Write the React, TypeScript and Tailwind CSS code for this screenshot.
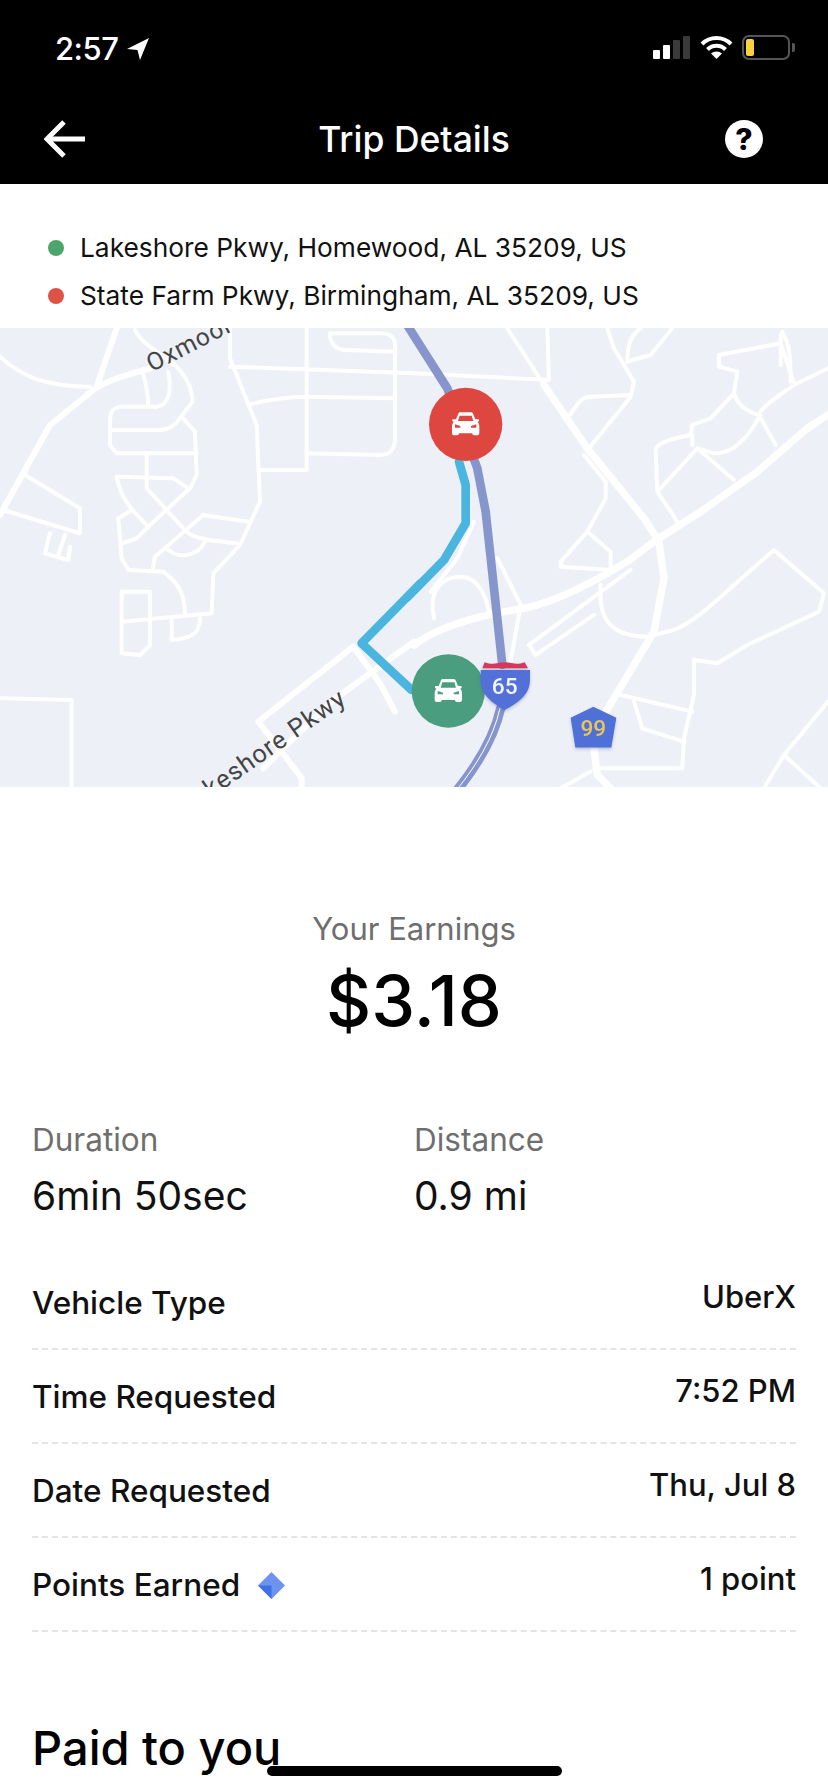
import { ReactNode } from 'react';

const FONT = "font-['Inter','Liberation_Sans',sans-serif]";

function StatusBar() {
  return (
    <div className="flex h-[90px] items-start justify-between pl-[55px] pr-[33px] pt-[31px]">
      <div className="flex items-center gap-[8px]">
        <span className="text-[31px] font-medium leading-[36px] tracking-[-0.5px] text-white">2:57</span>
        <svg width="24" height="24" viewBox="0 0 24 24">
          <path d="M23 1 L1 12 L11.5 13 L14 23 Z" fill="#fff" />
        </svg>
      </div>
      <div className="flex items-center gap-[9px] pt-[4px]">
        <svg width="38" height="25" viewBox="0 0 38 25">
          <rect x="0" y="15" width="7" height="9" rx="1" fill="#fff" />
          <rect x="10" y="10" width="7" height="14" rx="1" fill="#fff" />
          <rect x="20" y="5" width="7" height="19" rx="1" fill="#3a3a3a" />
          <rect x="30" y="1" width="7" height="23" rx="1" fill="#3a3a3a" />
        </svg>
        <svg width="33" height="25" viewBox="0 0 33 25" fill="none" stroke="#fff" strokeWidth="4">
          <path d="M2 9 C10 1 23 1 31 9" />
          <path d="M7.5 14.5 C12.5 9.5 20.5 9.5 25.5 14.5" />
          <path d="M16.5 24 L11 18.5 C14 15.8 19 15.8 22 18.5 Z" fill="#fff" stroke="none" />
        </svg>
        <div className="flex items-center gap-[2px]">
          <div className="h-[25px] w-[48px] rounded-[7px] border-2 border-[#555] p-[2px]">
            <div className="h-full w-[8px] rounded-[2px] bg-[#f7d13f]" />
          </div>
          <div className="h-[9px] w-[3px] rounded-r-[2px] bg-[#555]" />
        </div>
      </div>
    </div>
  );
}

function NavBar() {
  return (
    <div className="flex h-[94px] items-start px-[44px] pt-[30px]">
      <div className="flex-1">
        <svg width="41" height="38" viewBox="0 0 41 38" fill="none" stroke="#fff" strokeWidth="5">
          <path d="M20 2 L3 19 L20 36" />
          <path d="M3 19 L41 19" />
        </svg>
      </div>
      <span className="text-[35.5px] font-medium leading-[40px] text-white">Trip Details</span>
      <div className="flex flex-1 justify-end">
        <div className="mr-[21px] flex h-[38px] w-[38px] items-center justify-center rounded-full bg-white text-[30px] font-extrabold leading-none text-black">
          ?
        </div>
      </div>
    </div>
  );
}

function AddressLine({ dot, text }: { dot: string; text: string }) {
  return (
    <div className="flex h-[48px] items-center">
      <div className={`ml-[48px] h-[16px] w-[16px] rounded-full ${dot}`} />
      <span className="ml-[16px] text-[26.3px] leading-[32px] text-[#111]">{text}</span>
    </div>
  );
}

function CarIcon({ cx, cy }: { cx: number; cy: number }) {
  return (
    <g transform={`translate(${cx - 42} ${cy - 36})`} fill="#fff">
      <path d="M20 4 C21 1 24 0 27 0 L57 0 C60 0 63 1 64 4 L71 21 L78 21 C81 21 83 23 82 26 L78 29 C81 33 83 37 83 42 L83 62 C83 67 80 69 76 69 L68 69 C64 69 62 67 62 63 L22 63 C22 67 20 69 16 69 L8 69 C4 69 1 67 1 62 L1 42 C1 37 3 33 6 29 L2 26 C1 23 3 21 6 21 L13 21 Z" />
      <path d="M24 10 L60 10 L65 26 L19 26 Z M10 36 L10 46 L26 46 L26 41 Z M74 36 L74 46 L58 46 L58 41 Z" fill="currentColor" />
    </g>
  );
}

const thinLeft = [
  'M0 95 C60 150 130 185 270 185',
  'M405 15 C440 90 570 100 578 230 L540 280 C520 310 500 315 480 315 L335 315',
  'M430 150 C440 190 445 210 445 245',
  'M505 140 C515 190 510 240 470 245 L360 245 C335 250 330 265 330 290 L330 360 L350 385 L590 385',
  'M550 280 L585 320 L590 450 L570 490 L450 600 L410 640 L365 655',
  'M440 385 L440 490 L550 610 C570 640 620 645 710 655',
  'M350 455 L520 460 L565 490',
  'M350 455 C360 520 400 560 445 605',
  'M395 555 L355 580 L365 700 L385 735 L490 740 C530 770 555 800 555 870',
  'M745 590 L610 570 L465 695 L458 735',
  'M500 670 C530 700 590 700 615 650',
  'M450 800 L365 800 L365 985 L420 990 L450 960 Z',
  'M515 885 L515 945 C560 940 600 935 600 880',
  'M75 450 L240 550 L240 625 L10 555',
  'M150 625 L135 685 L205 705 L210 665',
  'M195 630 L175 690',
  'M690 125 L1242 145',
  'M920 10 L920 435 L780 435',
  'M745 240 C800 225 870 215 920 215 L1180 220',
  'M920 385 L1140 390 C1170 390 1185 375 1185 340 L1185 50 C1175 25 1160 25 1130 25 L990 25 C990 60 1010 75 1040 75 L1180 80',
  'M0 1120 L215 1125 L215 1390',
  'M365 890 L635 865 L640 745 L720 660 L780 530 L770 300 L690 100 L690 10',
];

const thickLeft = [
  'M350 10 L290 185',
  'M0 570 L150 300 L280 195 C330 160 400 145 450 130',
  'M1060 965 L775 1190 L860 1300 L905 1360 L905 1390',
  'M1060 965 L1140 1075 L1185 1160',
  'M1242 950 L1000 1125 L860 1260 L790 1330',
];

const thinRight = [
  'M280 10 L390 180',
  'M400 10 L405 165 L0 145',
  'M460 280 C490 240 500 215 530 215 L650 210',
  'M580 10 L600 70 L660 170 L650 215 L525 370',
  'M775 10 L710 90 L640 110 C640 60 650 30 680 10',
  'M510 390 L575 470 L575 520 L520 620 L440 710 L440 725 L590 735 L590 680 L520 620',
  'M60 880 C40 790 90 755 140 755 C190 755 215 810 225 860',
  'M180 590 L130 700 L50 800',
  'M250 700 L320 840 L290 1010',
  'M345 960 L650 735',
  'M345 960 L365 990 L540 870',
  'M560 780 C550 900 610 935 700 935 L780 915 C860 880 900 830 1080 675 L1230 805 L1215 860 L1000 960 L910 1015 L840 1005 L840 1110 L810 1240 L805 1330 L540 1330',
  'M620 1110 L835 1160',
  'M660 1130 L685 1210 L810 1250',
  'M440 1390 L530 1340',
  'M1242 1130 L1110 1290 L1050 1390',
  'M1110 1290 L1220 1390',
  'M790 590 L730 500 L725 375 C730 350 780 340 830 330 L835 300 L890 280 L960 205 L970 140 L915 125 L915 90 L1100 55 L1140 175',
  'M1100 30 L1100 120',
  'M1105 20 C1130 60 1130 120 1130 170',
  'M960 205 C970 240 1000 260 1035 270 L1085 360',
  'M1040 270 C1000 340 960 385 900 385 L850 370 L735 495',
  'M850 370 L960 465',
  'M835 330 L835 360',
  'M1040 260 C1060 230 1100 210 1140 180 L1242 130',
];

const thickRight = [
  'M390 180 L520 370 L690 580 L735 650 L750 760 L720 920 L570 1170',
  'M0 960 C80 900 200 870 330 850 C430 830 560 760 640 710 L720 650 L860 560 L1030 440 L1180 310 L1242 270',
  'M540 1270 L550 1350 L590 1390',
];

function TripMap() {
  return (
    <svg className="block h-[459px] w-[828px] shrink-0 bg-[#edf0f7]" viewBox="0 0 828 459">
      <defs>
        <filter id="badge" x="-30%" y="-30%" width="160%" height="170%">
          <feDropShadow dx="0" dy="5" stdDeviation="4" floodColor="#3a4a80" floodOpacity="0.3" />
        </filter>
      </defs>
      <g transform="translate(0 -3) scale(0.3333)" fill="none" strokeLinejoin="round" strokeLinecap="round">
        <g stroke="#fff" strokeWidth="12">
          {thinLeft.map((d) => <path key={d} d={d} />)}
        </g>
        <g stroke="#fff" strokeWidth="18">
          {thickLeft.map((d) => <path key={d} d={d} />)}
        </g>
        <path d="M1262 775 L1085 955 L1235 1095" stroke="#4ab5de" strokeWidth="26" />
        <text x="0" y="0" transform="translate(455 142) rotate(-27)" fontFamily="Roboto, sans-serif" fontSize="74" letterSpacing="3" fill="#444" stroke="none">Oxmoor</text>
        <text x="0" y="0" transform="translate(560 1470) rotate(-35)" fontFamily="Roboto, sans-serif" fontSize="76" letterSpacing="3" fill="#444" stroke="none">Lakeshore Pkwy</text>
      </g>
      <g transform="translate(414 -3) scale(0.3333)" fill="none" strokeLinejoin="round" strokeLinecap="round">
        <g stroke="#fff" strokeWidth="12">
          {thinRight.map((d) => <path key={d} d={d} />)}
        </g>
        <g stroke="#fff" strokeWidth="22">
          {thickRight.map((d) => <path key={d} d={d} />)}
        </g>
        <path d="M135 410 L155 480 L155 595 L90 705 L-20 817" stroke="#4ab5de" strokeWidth="26" />
        <path d="M-27 -10 L100 190 L190 430 L215 560 L265 1020" stroke="#8696cc" strokeWidth="26" />
        <path d="M260 1150 C240 1240 190 1320 130 1395" stroke="#8696cc" strokeWidth="28" />
        <path d="M258 1150 C238 1240 188 1320 128 1395" stroke="#fff" strokeWidth="3" />

        <circle cx="155" cy="298" r="110" fill="#de4640" />
        <g color="#de4640"><CarIcon cx={155} cy={298} /></g>
        <circle cx="103" cy="1098" r="110" fill="#4a9d7f" />
        <g color="#4a9d7f"><CarIcon cx={103} cy={1098} /></g>

        <g filter="url(#badge)">
          <path d="M200 1035 C260 1035 320 1035 348 1035 L348 1065 C348 1110 310 1135 272 1155 C235 1135 200 1110 200 1065 Z" fill="#5270d8" />
          <path d="M205 1030 L212 1012 C240 1022 250 1012 272 1012 C295 1012 305 1022 332 1012 L342 1030 Z" fill="#d6395c" />
          <text x="272" y="1107" textAnchor="middle" fontFamily="Roboto, sans-serif" fontSize="68" fontWeight="500" fill="#f2f4fb" stroke="none">65</text>
        </g>
        <g filter="url(#badge)">
          <path d="M538 1145 L607 1178 L592 1268 L484 1268 L470 1178 Z" fill="#4f6fd6" />
          <text x="538" y="1232" textAnchor="middle" fontFamily="Roboto, sans-serif" fontSize="68" fontWeight="500" fill="#e9c65a" stroke="none">99</text>
        </g>
      </g>
    </svg>
  );
}

function Stat({ label, value }: { label: string; value: string }) {
  return (
    <div className="flex w-[383px] flex-col">
      <span className="text-[31.5px] leading-[36px] text-[#6e6e6e]">{label}</span>
      <span className="mt-[16px] text-[39px] leading-[44px] text-[#111]">{value}</span>
    </div>
  );
}

function DetailRow({ label, value, extra }: { label: string; value: string; extra?: ReactNode }) {
  return (
    <div className="flex h-[94px] items-start justify-between border-b-2 border-dashed border-[#e4e4e4] text-[31.5px] font-medium leading-[36px] text-[#111]">
      <div className="flex items-center gap-[18px] pt-[29px]">
        <span>{label}</span>
        {extra}
      </div>
      <span className="pt-[23px] text-[31px]">{value}</span>
    </div>
  );
}

function Diamond() {
  return (
    <svg width="27" height="27" viewBox="0 0 27 27">
      <path d="M13.5 0 L27 13.5 L13.5 27 L0 13.5 Z" fill="#6e93ee" />
      <path d="M0 13.5 L13.5 13.5 L13.5 27 Z" fill="#3f70e8" />
    </svg>
  );
}

export default function App() {
  return (
    <div className={`relative flex h-[1792px] w-[828px] flex-col overflow-hidden bg-white ${FONT}`}>
      <div className="shrink-0 bg-black">
        <StatusBar />
        <NavBar />
      </div>

      <div className="flex h-[144px] shrink-0 flex-col pt-[40px]">
        <AddressLine dot="bg-[#4ca66b]" text="Lakeshore Pkwy, Homewood, AL 35209, US" />
        <AddressLine dot="bg-[#dd5347]" text="State Farm Pkwy, Birmingham, AL 35209, US" />
      </div>

      <TripMap />

      <div className="flex shrink-0 flex-col items-center pt-[124px]">
        <span className="text-[31px] leading-[36px] text-[#6e6e6e]">Your Earnings</span>
        <span className="mt-[14px] text-[70px] font-medium leading-[80px] text-black">$3.18</span>
      </div>

      <div className="flex shrink-0 px-[32px] pt-[81px]">
        <Stat label="Duration" value="6min 50sec" />
        <Stat label="Distance" value="0.9 mi" />
      </div>

      <div className="flex shrink-0 flex-col px-[32px] pt-[38px]">
        <DetailRow label="Vehicle Type" value="UberX" />
        <DetailRow label="Time Requested" value="7:52 PM" />
        <DetailRow label="Date Requested" value="Thu, Jul 8" />
        <DetailRow label="Points Earned" value="1 point" extra={<Diamond />} />
      </div>

      <div className="shrink-0 px-[32px] pt-[88px] text-[47px] font-medium leading-[56px] text-black">Paid to you</div>

      <div className="absolute left-[267px] top-[1766px] h-[10px] w-[295px] rounded-full bg-black" />
    </div>
  );
}
